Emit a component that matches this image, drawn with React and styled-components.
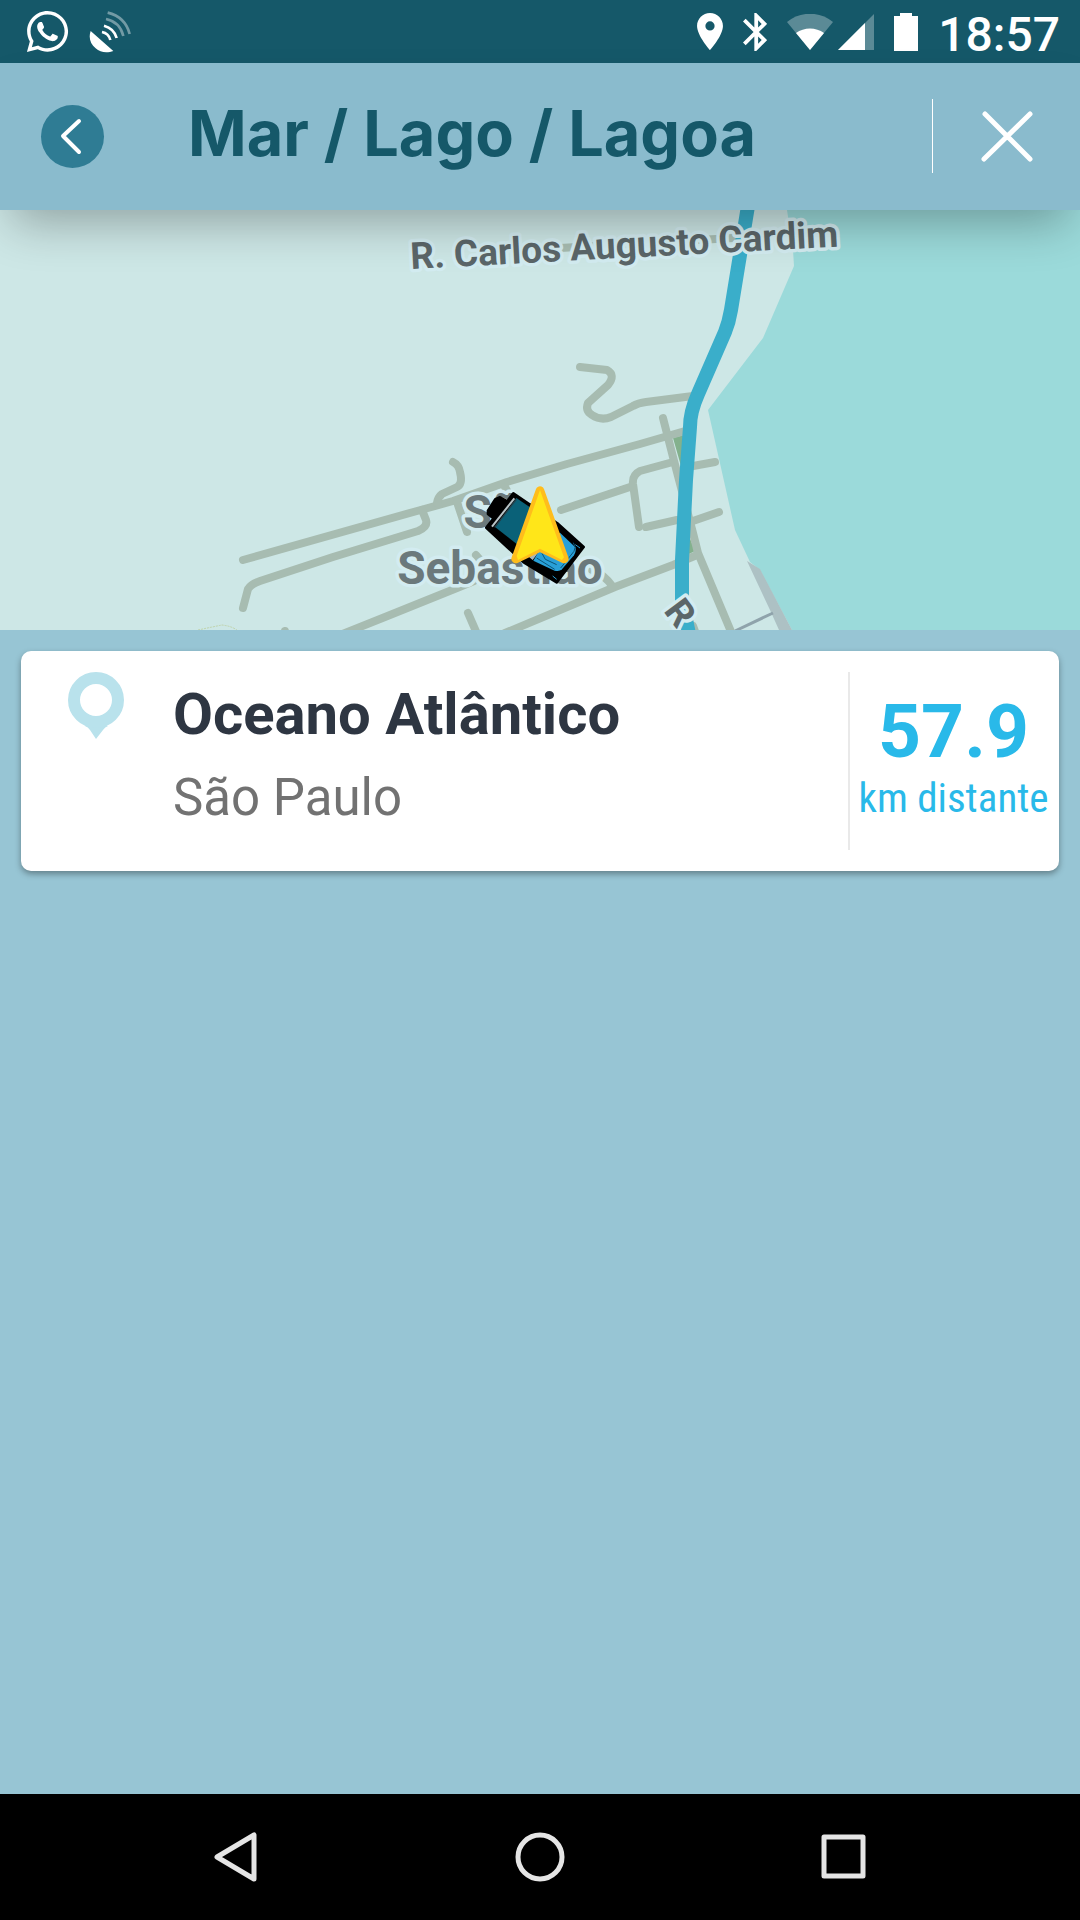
import React from 'react';
import styled, { createGlobalStyle, ThemeProvider } from 'styled-components';
import { FaWhatsapp } from 'react-icons/fa';

const theme = {
  colours: {
    brand1: '#155869',
    brand2: '#2f7c94',
    header: '#8abbcd',
    page: '#97c5d4',
    accent: '#29b9e9',
    pin: '#b9e2ec',
    white: '#ffffff',
    text1: '#2e3642',
    text2: '#727272',
    divider: '#e9e9e9',
  },
};

const GlobalStyle = createGlobalStyle`
  *, *::before, *::after {
    box-sizing: border-box;
  }

  body {
    margin: 0;
    font-family: Roboto, sans-serif;
    background-color: ${theme.colours.page};
  }

  svg {
    display: block;
  }
`;

const Screen = styled.div`
  display: flex;
  flex-direction: column;
  min-height: 100vh;
`;

const StatusBar = styled.div`
  display: flex;
  align-items: center;
  justify-content: space-between;
  height: 63px;
  padding: 0 20px 0 24px;
  color: ${(props) => props.theme.colours.white};
  background-color: ${(props) => props.theme.colours.brand1};
`;

const StatusGroup = styled.div`
  display: flex;
  align-items: center;
  gap: 20px;
`;

const NoticeGroup = styled(StatusGroup)`
  gap: 18px;
`;

const NetworkGroup = styled.div`
  display: flex;
  gap: 5px;
`;

const Clock = styled.time`
  font-size: 48px;
  font-weight: 500;
  line-height: 56px;
  padding-top: 6px;
`;

const Header = styled.header`
  position: relative;
  z-index: 1;
  display: flex;
  align-items: center;
  height: 147px;
  padding: 0 0 1px 41px;
  background-color: ${(props) => props.theme.colours.header};
  box-shadow: 0 24px 48px -12px rgba(0, 0, 0, 0.3);
`;

const IconButton = styled.button`
  display: flex;
  align-items: center;
  justify-content: center;
  padding: 0;
  border: 0;
  background: none;
  cursor: pointer;
`;

const BackButton = styled(IconButton)`
  width: 63px;
  height: 63px;
  border-radius: 50%;
  background-color: ${(props) => props.theme.colours.brand2};
`;

const Title = styled.h1`
  flex: 1;
  margin: 0;
  padding: 0 0 6px 84px;
  font-family: Inter, sans-serif;
  font-size: 63px;
  font-weight: 700;
  line-height: 76px;
  color: ${(props) => props.theme.colours.brand1};
`;

const CloseButton = styled(IconButton)`
  width: 148px;
  height: 74px;
  border-left: 1px solid ${(props) => props.theme.colours.white};
`;

const MapArea = styled.section`
  height: 420px;
  overflow: hidden;
  background-color: #cde7e6;

  svg {
    width: 100%;
    height: 100%;
  }
`;

const MapLabel = styled.text`
  font-family: Roboto, sans-serif;
  font-size: ${(props) => (props.$area ? 46 : 37)}px;
  font-weight: 700;
  text-anchor: ${(props) => (props.$area ? 'middle' : 'start')};
  fill: ${(props) => (props.$area ? '#6b797c' : '#5b6669')};
  stroke: #d3ecf1;
  stroke-width: 7px;
  stroke-linejoin: round;
  paint-order: stroke;
`;

const Results = styled.main`
  flex: 1;
  padding: 21px;
`;

const Card = styled.article`
  display: flex;
  height: 220px;
  padding: 21px 0;
  border-radius: 10px;
  background-color: ${(props) => props.theme.colours.white};
  box-shadow: 0 3px 6px rgba(0, 0, 0, 0.35);
`;

const CardIcon = styled.div`
  width: 152px;
  padding-left: 47px;
`;

const CardText = styled.div`
  flex: 1;
  padding-top: 8px;
`;

const Name = styled.h2`
  margin: 0;
  font-size: 58px;
  font-weight: 700;
  line-height: 68px;
  color: ${(props) => props.theme.colours.text1};
`;

const Place = styled.p`
  margin: 0;
  padding-top: 18px;
  font-size: 51px;
  line-height: 64px;
  color: ${(props) => props.theme.colours.text2};
`;

const Distance = styled.div`
  display: flex;
  flex-direction: column;
  align-items: center;
  width: 211px;
  padding: 17px 2px 0 0;
  border-left: 2px solid ${(props) => props.theme.colours.divider};
  color: ${(props) => props.theme.colours.accent};
`;

const DistanceValue = styled.strong`
  font-size: 75px;
  font-weight: 700;
  line-height: 84px;
`;

const DistanceUnit = styled.span`
  font-family: 'Roboto Condensed', Roboto, sans-serif;
  font-size: 41px;
  line-height: 50px;
  white-space: nowrap;
`;

const NavBar = styled.nav`
  display: flex;
  justify-content: center;
  height: 126px;
  background-color: #000000;
`;

const NavButton = styled(IconButton)`
  width: 304px;
`;

const NavIcon = styled.svg`
  width: 50px;
  height: 50px;
  fill: none;
  stroke: #e5e5e5;
  stroke-width: 5px;
  stroke-linejoin: round;
`;

const roads = [
  'M560 38L733 28',
  'M243 350L417 301L453 291L507 272L567 254L640 234L685 221',
  'M243 398L248 379Q251 374 260 371L333 347L418 321Q428 317 426 310L422 300',
  'M453 252Q459 255 460 262Q463 274 457 277L442 284Q438 287 437 293',
  'M457 292L467 322',
  'M505 277L512 290',
  'M476 345L482 352',
  'M580 157L607 160Q616 165 608 175L588 193Q585 201 592 205Q601 211 611 207L633 196Q638 193 646 192L693 186',
  'M561 300L630 277',
  'M673 252L640 261Q632 265 633 274L639 317',
  'M693 256L715 252',
  'M646 317L677 310',
  'M690 312L719 302',
  'M663 208L673 247L693 323L698 343L732 424',
  'M697 345L673 355L615 377L505 423',
  'M340 425L385 407L457 378L474 371',
  'M468 403L478 426',
  'M592 360Q604 364 613 377',
  'M285 421L286 426',
  'M693 416L696 424',
];

const StreetMap = () => (
  <svg
    viewBox="0 0 1080 420"
    preserveAspectRatio="xMidYMid slice"
    role="img"
    aria-label="Mapa"
  >
    <path fill="#cde7e6" d="M0 0H1080V420H0Z" />
    <path
      fill="#9bdada"
      d="M787 0L793 40L794 56L763 128L708 200L735 320L750 352L760 360L792 420H1080V0Z"
    />
    <path fill="#adc1c4" d="M747 351L760 359L792 420H779L770 400Z" />
    <path fill="none" stroke="#8fa3ab" strokeWidth="3" d="M735 421L773 403" />
    <path fill="#83b18d" d="M673 228L684 225L681 256ZM689 326L695 341L687 345Z" />
    <path
      fill="none"
      stroke="#bfd3ab"
      strokeDasharray="2 1"
      d="M198 420Q212 417 222 415Q231 416 237 420"
    />
    <g
      fill="none"
      stroke="#a7bcb1"
      strokeWidth="8"
      strokeLinecap="round"
      strokeLinejoin="round"
    >
      {roads.map((d) => (
        <path key={d} d={d} />
      ))}
    </g>
    <path
      fill="none"
      stroke="#3aaeca"
      strokeWidth="14"
      strokeLinejoin="round"
      d="M748 -4L731 100Q729 112 725 122L698 184Q690 202 690 217L686 270L682 350L682 390L689 424"
    />
    <MapLabel transform="translate(411 59) rotate(-3)">
      R. Carlos Augusto Cardim
    </MapLabel>
    <MapLabel transform="translate(663 401) rotate(53)">R</MapLabel>
    <MapLabel $area x="503" y="318">
      São
    </MapLabel>
    <MapLabel $area x="500" y="374">
      Sebastião
    </MapLabel>

    {/* vehicle and heading arrow, drawn at 3x */}
    <g transform="translate(460 260) scale(0.3333)" strokeLinejoin="round">
      <path
        stroke="#000"
        strokeWidth="8"
        d="M84 132L84 122L106 88L120 82L138 92L96 142ZM160 70L292 160L371 231L290 337L190 276L79 173Z"
      />
      <path fill="#0a6178" d="M169 84L240 132L178 228L106 172Z" />
      <path fill="none" stroke="#b9c4c8" strokeWidth="6" d="M96 170L163 85" />
      <path fill="none" stroke="#24424c" strokeWidth="4" d="M104 172L169 88" />
      <path fill="#a9b4b8" d="M208 262L232 236L236 246L218 270Z" />
      <path
        fill="#29a0d8"
        d="M300 188L346 232Q350 242 342 256L306 298Q298 306 284 302L220 272L240 238Z"
      />
      <path
        fill="none"
        stroke="#0b5476"
        strokeWidth="3"
        d="M230 264L284 298M246 250L256 268L290 284M340 218Q350 232 342 244L302 294"
      />
      <path stroke="#29a0d8" strokeWidth="3" d="M346 224L360 234M278 318L290 328" />
      <path
        fill="#ffe619"
        stroke="#ffbd1c"
        strokeWidth="26"
        d="M240 62L313 267L240 232L167 267Z"
      />
      <path fill="#ffe619" d="M240 60L312 262L306 270L240 236L174 270L170 258Z" />
    </g>
  </svg>
);

const SatelliteIcon = () => (
  <svg width="42" height="42" viewBox="268 32 126 126" fill="none" aria-hidden="true">
    <path fill="#fff" d="M273 92L341 152C325 158 302 158 288 144C272 130 266 112 273 92Z" />
    <g stroke="#fff" strokeWidth="8">
      <path d="M307 95Q327 99 332 119" />
      <path d="M313 76Q343 84 351 113" />
      <path opacity="0.4" d="M319 56Q361 65 371 107" />
      <path opacity="0.4" d="M324 37Q377 50 390 101" />
    </g>
  </svg>
);

const LocationIcon = () => (
  <svg width="26" height="37" viewBox="5 2 14 20" fill="#fff" aria-hidden="true">
    <path d="M12 2C8.13 2 5 5.13 5 9c0 5.25 7 13 7 13s7-7.75 7-13c0-3.87-3.13-7-7-7zm0 9.5a2.5 2.5 0 1 1 0-5 2.5 2.5 0 0 1 0 5z" />
  </svg>
);

const BluetoothIcon = () => (
  <svg width="24" height="38" viewBox="5 2 12.7 20" fill="#fff" aria-hidden="true">
    <path d="M17.71 7.71L12 2h-1v7.59L6.41 5 5 6.41 10.59 12 5 17.59 6.41 19 11 14.41V22h1l5.71-5.71-4.3-4.29 4.3-4.29zM13 5.83l1.88 1.88L13 9.59V5.83zm1.88 10.46L13 18.17v-3.76l1.88 1.88z" />
  </svg>
);

const WifiIcon = () => (
  <svg width="46" height="36" viewBox="0 0 46 36" fill="#fff" aria-hidden="true">
    <path opacity="0.3" d="M23 36L0 8C13 -3 33 -3 46 8Z" />
    <path d="M23 36L9 19C17 13 29 13 37 19Z" />
  </svg>
);

const SignalIcon = () => (
  <svg width="36" height="36" viewBox="0 0 36 36" fill="#fff" aria-hidden="true">
    <path opacity="0.3" d="M36 0V36H0Z" />
    <path d="M27 9V36H0Z" />
  </svg>
);

const BatteryIcon = () => (
  <svg width="24" height="38" viewBox="0 0 24 38" fill="#fff" aria-hidden="true">
    <path d="M6 0H18V3H24V38H0V3H6Z" />
  </svg>
);

const PinIcon = () => (
  <svg width="57" height="67" viewBox="0 0 57 67" aria-hidden="true">
    <path fill={theme.colours.pin} d="M17 54Q20 55 22 58L28 67L35 58Q37 55 40 54Z" />
    <circle
      cx="28"
      cy="28"
      r="22"
      fill="none"
      stroke={theme.colours.pin}
      strokeWidth="12"
    />
  </svg>
);

const results = [
  { name: 'Oceano Atlântico', place: 'São Paulo', distance: '57.9' },
];

const App = () => {
  return (
    <ThemeProvider theme={theme}>
      <GlobalStyle />
      <Screen>
        <StatusBar>
          <NoticeGroup>
            <FaWhatsapp size={47} />
            <SatelliteIcon />
          </NoticeGroup>
          <StatusGroup>
            <LocationIcon />
            <BluetoothIcon />
            <NetworkGroup>
              <WifiIcon />
              <SignalIcon />
            </NetworkGroup>
            <BatteryIcon />
            <Clock>18:57</Clock>
          </StatusGroup>
        </StatusBar>

        <Header>
          <BackButton type="button" aria-label="Voltar">
            <svg width="63" height="63" viewBox="0 0 63 63" fill="none">
              <path
                d="M38 16L22 31L38 47"
                stroke="#fff"
                strokeWidth="4"
                strokeLinecap="round"
                strokeLinejoin="round"
              />
            </svg>
          </BackButton>
          <Title>Mar / Lago / Lagoa</Title>
          <CloseButton type="button" aria-label="Fechar">
            <svg width="52" height="52" viewBox="0 0 52 52" fill="none">
              <path
                d="M4 4L49 49M49 4L3 49"
                stroke="#fff"
                strokeWidth="5"
                strokeLinecap="round"
              />
            </svg>
          </CloseButton>
        </Header>

        <MapArea>
          <StreetMap />
        </MapArea>

        <Results>
          {results.map((result) => (
            <Card key={result.name}>
              <CardIcon>
                <PinIcon />
              </CardIcon>
              <CardText>
                <Name>{result.name}</Name>
                <Place>{result.place}</Place>
              </CardText>
              <Distance>
                <DistanceValue>{result.distance}</DistanceValue>
                <DistanceUnit>km distante</DistanceUnit>
              </Distance>
            </Card>
          ))}
        </Results>

        <NavBar>
          <NavButton type="button" aria-label="Voltar">
            <NavIcon viewBox="0 0 50 50">
              <path d="M43 3V47L6 25Z" />
            </NavIcon>
          </NavButton>
          <NavButton type="button" aria-label="Início">
            <NavIcon viewBox="0 0 50 50">
              <circle cx="25" cy="25" r="22" />
            </NavIcon>
          </NavButton>
          <NavButton type="button" aria-label="Recentes">
            <NavIcon viewBox="0 0 50 50">
              <rect x="5" y="5" width="39" height="39" />
            </NavIcon>
          </NavButton>
        </NavBar>
      </Screen>
    </ThemeProvider>
  );
};

export default App;
